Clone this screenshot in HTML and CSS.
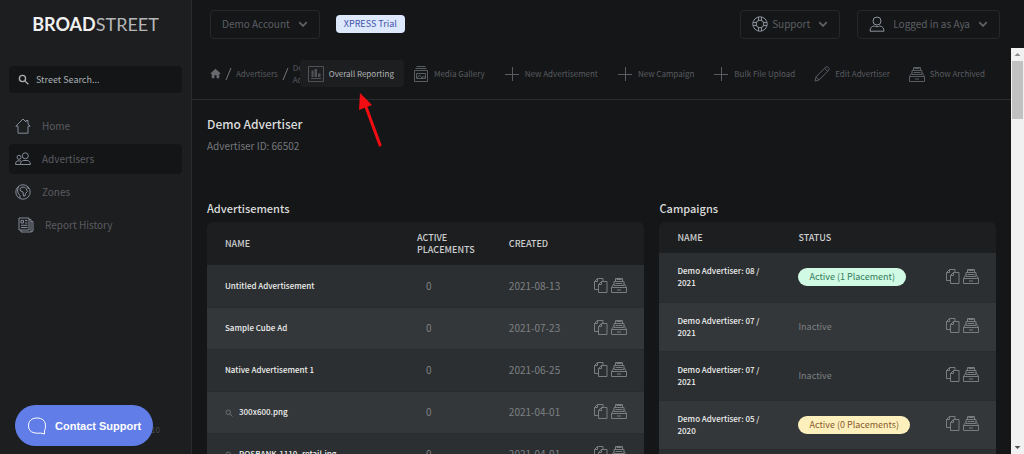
FILE: index.html
```
<!DOCTYPE html>
<html lang="en">
<head>
  <meta charset="UTF-8" />
  <meta name="viewport" content="width=device-width, initial-scale=1.0" />
  <title>Broadstreet - Demo Advertiser</title>
  <link rel="stylesheet" href="styles.css">
</head>
<body>
  <!-- icon sprite -->
  <svg class="sprite" aria-hidden="true">
    <symbol id="i-search" viewBox="0 0 16 16"><circle cx="6.500" cy="6.500" r="4.500"/><path d="M10 10l5 5"/></symbol>
    <symbol id="i-home" viewBox="0 0 16 16"><path d="M.8 8.200L8 1l3 3V2.500h2v3.500l2.200 2.200M.8 8.200h2.200V15.200h10V8.200h2.200"/></symbol>
    <symbol id="i-users" viewBox="0 0 16 16"><circle cx="10.300" cy="4.800" r="3"/><circle cx="4" cy="6.300" r="2"/><path d="M5.500 13.500h9.900c0-2.500-1.300-4-3.400-4H8.800c-2 0-3.300 1.500-3.300 4zM5.500 13.500H.6c0-2.300.8-3.600 2.400-3.600h3"/></symbol>
    <symbol id="i-globe" viewBox="0 0 16 16"><circle cx="8" cy="8" r="7.200"/><path d="M6 3.500L9.500 3l1.500 1.500 1.500 3-2 2-.5 2.500L8.500 12l-.5-4-2.500-1L5 5zM3.500 2.500L2.500 6l.5 3L5 11.500V14M12 2l1.500 3"/></symbol>
    <symbol id="i-news" viewBox="0 0 16 16"><path d="M1 1h10v12H1zM11 2.500h2V15H3v-2M13 4.500h2V14l-2 1M3 3.500h2.500V6H3zM7 3.500h2.500M7 6h2.500M3 8.300h6.500M3 10.500h6.500"/></symbol>
    <symbol id="i-house" viewBox="0 0 16 16"><path d="M8 1L0 8.500h2.500V15h4v-4.500h3V15h4V8.500H16z"/></symbol>
    <symbol id="i-report" viewBox="0 0 16 16"><path d="M.5.5h15v15H.5zM3 12.500h10"/><path d="M3.500 4.500h2v6.500h-2zM6.500 3h2.500v8H6.500zM10 7.500h2.500V11H10z" fill="currentColor" stroke="none"/></symbol>
    <symbol id="i-media" viewBox="0 0 16 16"><path d="M1.500 4.500h13v11h-13zM2.500 2.500h11M3.500.5h9M3.500 7.500h9v5h-9zM4 12l2.500-3L9 12l1.500-2 2 2"/></symbol>
    <symbol id="i-plus" viewBox="0 0 16 16"><path d="M8.500 1v14M1 8.500h14"/></symbol>
    <symbol id="i-pencil" viewBox="0 0 16 16"><path d="M1 15l1-4.200L12 .9c1.500-.8 3.800 1.300 3 3L5 14zM2 10.800L5.200 14M10.600 2.300l3.100 3.100"/></symbol>
    <symbol id="i-archive" viewBox="0 0 16 16"><path d="M.5 10.500h15v5H.5zL3 6.500M15.500 10.500l-2.500-4M3 8.500v-4h10v4M4.500 4.500v-3h7v3M5.500 2.500h5M4.500 6.500h7M3 8.500h10M6 13h4"/></symbol>
    <symbol id="i-copy" viewBox="0 0 16 16"><path d="M8.500 4.500H14v11H5.500v-8zM8.500 4.500v3h-3M5.500 12.500h-4v-8l3-3h5.500v3M4.500 1.500v3h-3"/></symbol>
    <symbol id="i-ring" viewBox="0 0 16 16"><circle cx="8" cy="8" r="7.200"/><circle cx="8" cy="8" r="3.800"/><path d="M6.500 1v3.500M9.500 1v3.500M6.500 11.500V15M9.500 11.500V15M1 6.500h3.500M1 9.500h3.500M11.500 6.500H15M11.500 9.500H15"/></symbol>
    <symbol id="i-user" viewBox="0 0 16 16"><circle cx="8" cy="5" r="4"/><path d="M1 15.200c0-3.500 2-5.200 4.500-5.200 1.500 1 3.500 1 5 0C13 10 15 11.700 15 15.200z"/></symbol>
    <symbol id="i-down" viewBox="0 0 16 16"><path d="M2 5l6 6 6-6"/></symbol>
    <symbol id="i-chat" viewBox="0 0 20 20"><path d="M17.500 14.500V18L13.500 17C11.500 17.400 9 17.300 7 16.800 3.500 16 1.500 13.500 1.500 9.800 1.500 5 4.500 2 10 2s8.500 3 8.500 7.800c0 2-.3 3.500-1 4.700z"/></symbol>
  </svg>

  <div class="app">
    <aside class="sidebar">
      <a class="logo" href="#"><b>BROAD</b>STREET</a>
      <label class="search">
        <svg class="icon"><use href="#i-search"/></svg>
        <input type="text" placeholder="Street Search..." aria-label="Street Search">
      </label>
      <nav class="nav">
        <a href="#"><svg class="icon"><use href="#i-home"/></svg>Home</a>
        <a href="#" class="active"><svg class="icon"><use href="#i-users"/></svg>Advertisers</a>
        <a href="#"><svg class="icon"><use href="#i-globe"/></svg>Zones</a>
        <a href="#" class="indent"><svg class="icon"><use href="#i-news"/></svg>Report History</a>
      </nav>
      <div class="version">10</div>
    </aside>

    <div class="main">
      <header class="topbar">
        <button class="dropdown">Demo Account <svg class="chevron"><use href="#i-down"/></svg></button>
        <span class="trial">XPRESS Trial</span>
        <button class="dropdown support"><svg class="icon"><use href="#i-ring"/></svg>Support <svg class="chevron"><use href="#i-down"/></svg></button>
        <button class="dropdown account"><svg class="icon"><use href="#i-user"/></svg>Logged in as Aya <svg class="chevron"><use href="#i-down"/></svg></button>
      </header>

      <div class="scroll-area">
        <div class="page">
          <div class="toolbar">
            <div class="breadcrumb">
              <a href="#" aria-label="Home"><svg class="house"><use href="#i-house"/></svg></a>
              <svg class="slash" viewBox="0 0 6 12"><path d="M5.500 0L.5 12"/></svg>
              <a href="#">Advertisers</a>
              <svg class="slash" viewBox="0 0 6 12"><path d="M5.500 0L.5 12"/></svg>
              <span class="current">Demo Advertiser</span>
            </div>
            <div class="actions">
              <button class="active"><svg class="icon"><use href="#i-report"/></svg>Overall Reporting</button>
              <button><svg class="icon"><use href="#i-media"/></svg>Media Gallery</button>
              <button><svg class="icon"><use href="#i-plus"/></svg>New Advertisement</button>
              <button><svg class="icon"><use href="#i-plus"/></svg>New Campaign</button>
              <button><svg class="icon"><use href="#i-plus"/></svg>Bulk File Upload</button>
              <button><svg class="icon"><use href="#i-pencil"/></svg>Edit Advertiser</button>
              <button><svg class="icon"><use href="#i-archive"/></svg>Show Archived</button>
            </div>
          </div>

          <div class="content">
            <h1>Demo Advertiser</h1>
            <p class="advertiser-id">Advertiser ID: 66502</p>

            <div class="panels">
              <section>
                <h2>Advertisements</h2>
                <table class="ads">
                  <thead>
                    <tr><th class="col-name">Name</th><th class="col-active">Active Placements</th><th>Created</th><th class="col-tools"></th></tr>
                  </thead>
                  <tbody>
                    <tr><td><a href="#">Untitled Advertisement</a></td><td class="count">0</td><td>2021-08-13</td><td class="tools"><button aria-label="Copy"><svg class="icon"><use href="#i-copy"/></svg></button><button aria-label="Archive"><svg class="icon"><use href="#i-archive"/></svg></button></td></tr>
                    <tr><td><a href="#">Sample Cube Ad</a></td><td class="count">0</td><td>2021-07-23</td><td class="tools"><button aria-label="Copy"><svg class="icon"><use href="#i-copy"/></svg></button><button aria-label="Archive"><svg class="icon"><use href="#i-archive"/></svg></button></td></tr>
                    <tr><td><a href="#">Native Advertisement 1</a></td><td class="count">0</td><td>2021-06-25</td><td class="tools"><button aria-label="Copy"><svg class="icon"><use href="#i-copy"/></svg></button><button aria-label="Archive"><svg class="icon"><use href="#i-archive"/></svg></button></td></tr>
                    <tr><td><svg class="lens"><use href="#i-search"/></svg><a href="#">300x600.png</a></td><td class="count">0</td><td>2021-04-01</td><td class="tools"><button aria-label="Copy"><svg class="icon"><use href="#i-copy"/></svg></button><button aria-label="Archive"><svg class="icon"><use href="#i-archive"/></svg></button></td></tr>
                    <tr><td><svg class="lens"><use href="#i-search"/></svg><a href="#">ROSBANK-1110_retail.jpg</a></td><td class="count">0</td><td>2021-04-01</td><td class="tools"><button aria-label="Copy"><svg class="icon"><use href="#i-copy"/></svg></button><button aria-label="Archive"><svg class="icon"><use href="#i-archive"/></svg></button></td></tr>
                  </tbody>
                </table>
              </section>

              <section>
                <h2>Campaigns</h2>
                <table class="campaigns">
                  <thead>
                    <tr><th class="col-name">Name</th><th>Status</th><th class="col-tools"></th></tr>
                  </thead>
                  <tbody>
                    <tr><td><a href="#">Demo Advertiser: 08 / 2021</a></td><td><span class="pill green">Active (1 Placement)</span></td><td class="tools"><button aria-label="Copy"><svg class="icon"><use href="#i-copy"/></svg></button><button aria-label="Archive"><svg class="icon"><use href="#i-archive"/></svg></button></td></tr>
                    <tr><td><a href="#">Demo Advertiser: 07 / 2021</a></td><td>Inactive</td><td class="tools"><button aria-label="Copy"><svg class="icon"><use href="#i-copy"/></svg></button><button aria-label="Archive"><svg class="icon"><use href="#i-archive"/></svg></button></td></tr>
                    <tr><td><a href="#">Demo Advertiser: 07 / 2021</a></td><td>Inactive</td><td class="tools"><button aria-label="Copy"><svg class="icon"><use href="#i-copy"/></svg></button><button aria-label="Archive"><svg class="icon"><use href="#i-archive"/></svg></button></td></tr>
                    <tr><td><a href="#">Demo Advertiser: 05 / 2020</a></td><td><span class="pill yellow">Active (0 Placements)</span></td><td class="tools"><button aria-label="Copy"><svg class="icon"><use href="#i-copy"/></svg></button><button aria-label="Archive"><svg class="icon"><use href="#i-archive"/></svg></button></td></tr>
                    <tr><td></td><td></td><td class="tools"></td></tr>
                  </tbody>
                </table>
              </section>
            </div>
          </div>
        </div>

        <div class="scrollbar" aria-hidden="true">
          <svg viewBox="0 0 13 13"><path d="M3.500 8l3-3 3 3z" fill="#8b8b8b"/></svg>
          <div class="thumb"></div>
          <svg viewBox="0 0 13 13"><path d="M3.500 5l3 3 3-3z" fill="#505050"/></svg>
        </div>
      </div>
    </div>
  </div>

  <svg class="pointer" viewBox="0 0 28 58" aria-hidden="true"><path d="M23 54L9 16" stroke="#f10d12" stroke-width="3" stroke-linecap="round"/><path d="M3 2L2 19l13-5z" fill="#f10d12"/></svg>

  <button class="contact"><svg><use href="#i-chat"/></svg>Contact Support</button>
</body>
</html>
```
FILE: styles.css
```
* {
  box-sizing: border-box;
}
body {
  margin: 0;
  background-color: #151618;
  color: #66696d;
  font-family: "Noto Sans CJK SC", "Noto Sans", sans-serif;
  font-size: 10px;
  line-height: 16px;
}
a {
  color: inherit;
  text-decoration: none;
}
button {
  font: inherit;
  color: inherit;
  background: none;
  border: none;
  padding: 0;
  cursor: pointer;
}
svg {
  flex: none;
  fill: none;
  stroke: currentColor;
}
.sprite {
  display: none;
}
.icon {
  width: 16px;
  height: 16px;
}
.chevron {
  width: 10px;
  height: 10px;
  stroke-width: 3;
}
.app {
  display: flex;
  height: 100vh;
  overflow: hidden;
}

/* sidebar */
.sidebar {
  display: flex;
  flex-direction: column;
  width: 192px;
  flex: none;
  padding: 12px 9px 16px;
  background-color: #1d1e20;
  border-right: 1px solid #292b2e;
}
.logo {
  font-family: Lato, sans-serif;
  font-size: 18px;
  line-height: 24px;
  color: #b4b6b8;
  text-align: center;
}
.logo b {
  color: #f0f0f0;
}
.search {
  display: flex;
  align-items: center;
  gap: 7px;
  margin-top: 30px;
  padding: 0 9px;
  height: 27px;
  border-radius: 4px;
  background-color: #141517;
  color: #a9adb0;
}
.search .icon {
  width: 11px;
  height: 11px;
  stroke-width: 2;
}
.search input {
  flex: 1;
  min-width: 0;
  padding: 0;
  border: none;
  background: none;
  font: inherit;
  font-size: 9px;
  color: inherit;
}
.search input::placeholder {
  color: #a9b0b3;
}
.nav {
  display: flex;
  flex-direction: column;
  gap: 3px;
  margin-top: 18px;
  color: #5a5c61;
}
.nav a {
  display: flex;
  align-items: center;
  gap: 11px;
  height: 30px;
  padding-left: 6px;
  border-radius: 4px;
}
.nav .icon {
  color: #858a98;
}
.nav a.active {
  background-color: #141517;
}
.nav a.indent {
  padding-left: 9px;
}
.version {
  margin-top: auto;
  padding-right: 22px;
  text-align: right;
  font-size: 8px;
  color: #4a4c50;
}

/* top bar */
.main {
  display: flex;
  flex-direction: column;
  flex: 1;
  min-width: 0;
}
.topbar {
  display: flex;
  align-items: center;
  height: 48px;
  padding: 0 24px 0 18px;
}
.dropdown {
  display: flex;
  align-items: center;
  gap: 8px;
  height: 29px;
  padding: 0 11px;
  border: 1px solid #26282a;
  border-radius: 4px;
  color: #5c5f64;
}
.dropdown .icon {
  color: #8c939b;
}
.trial {
  margin-left: 16px;
  padding: 1px 8px;
  border-radius: 4px;
  background-color: #dde8fd;
  color: #4353ab;
  font-size: 9px;
}
.support {
  gap: 4px;
  margin-left: auto;
}
.support .chevron {
  margin-left: 4px;
}
.account {
  margin-left: 17px;
}

/* page */
.scroll-area {
  display: flex;
  flex: 1;
  min-height: 0;
}
.page {
  flex: 1;
  min-width: 0;
  overflow: hidden;
}
.scrollbar {
  display: flex;
  flex-direction: column;
  width: 13px;
  background-color: #f1f1f1;
}
.scrollbar svg {
  height: 13px;
  stroke: none;
}
.scrollbar svg:last-child {
  margin-top: auto;
}
.thumb {
  height: 58px;
  margin: 0 1px;
  background-color: #c1c1c1;
}
.toolbar {
  display: flex;
  align-items: center;
  height: 52px;
  padding: 0 16px 0 18px;
  border-bottom: 1px solid #292b2d;
  font-size: 8px;
  line-height: 12px;
  color: #595c60;
}
.breadcrumb {
  display: flex;
  align-items: center;
  gap: 4px;
  flex: 1;
  min-width: 0;
  overflow: hidden;
}
.breadcrumb .house {
  display: block;
  width: 11px;
  height: 11px;
  fill: #66696e;
  stroke: none;
}
.slash {
  width: 7px;
  height: 12px;
  stroke: #74777b;
}
.current {
  width: min-content;
}
.actions {
  display: flex;
  flex: none;
  gap: 1px;
}
.actions button {
  display: flex;
  align-items: center;
  gap: 5px;
  height: 27px;
  padding: 0 10px 0 8px;
  border-radius: 4px;
}
.actions button.active {
  background-color: #1d1e20;
  color: #b4b6b8;
}
.actions .active .icon {
  color: #505257;
}
.content {
  padding: 16px 15px 0;
}
h1,
h2 {
  margin: 0;
  font-weight: 500;
  color: #dcdddd;
}
h1 {
  font-size: 12px;
  line-height: 16px;
}
h2 {
  font-size: 11px;
  line-height: 16px;
  margin-bottom: 6px;
}
.advertiser-id {
  margin: 6px 0 0;
  color: #76787c;
}
.panels {
  display: grid;
  grid-template-columns: 13fr 10fr;
  align-items: start;
  gap: 15px;
  margin-top: 46px;
}

/* tables */
table {
  width: 100%;
  table-layout: fixed;
  border-collapse: collapse;
  border-radius: 6px 6px 0 0;
  overflow: hidden;
}
th {
  padding: 0;
  background-color: #1d1e20;
  font-size: 9px;
  line-height: 12px;
  font-weight: 500;
  text-align: left;
  text-transform: uppercase;
  color: #cdcecf;
}
td {
  padding: 0;
  color: #7d8083;
}
th:first-child,
td:first-child {
  padding-left: 18px;
}
td:first-child {
  font-size: 8px;
  line-height: 12px;
  font-weight: 500;
  color: #eeefef;
}
tbody tr {
  background-color: #2c2f31;
  border-bottom: 1px solid #292c2e;
}
tbody tr:nth-child(even) {
  background-color: #343739;
}
.ads th {
  height: 43px;
}
.ads td {
  height: 42px;
}
.ads .col-name {
  width: 48%;
}
.ads .col-active {
  width: 21%;
  padding-right: 24px;
}
.ads .count {
  padding-left: 9px;
}
.campaigns th {
  height: 31px;
}
.campaigns td {
  height: 49px;
  font-size: 9px;
}
.campaigns td:first-child {
  padding-right: 32px;
  font-size: 8px;
}
.campaigns .col-name {
  width: 139px;
}
.col-tools {
  width: 51px;
}
.tools {
  padding-bottom: 3px;
  white-space: nowrap;
}
.tools button {
  vertical-align: middle;
}
.tools button + button {
  margin-left: 2px;
}
.tools .icon {
  display: block;
  color: #7a7d80;
}
.lens {
  width: 8px;
  height: 8px;
  margin-right: 6px;
  color: #6d7073;
  stroke-width: 2;
  vertical-align: middle;
}
.pill {
  display: inline-block;
  padding: 1px 11px;
  border-radius: 9px;
}
.pill.green {
  background-color: #d0fae3;
  color: #347a5b;
}
.pill.yellow {
  background-color: #fdf0bd;
  color: #895a2d;
}

/* overlays */
.pointer {
  position: absolute;
  left: 357px;
  top: 91px;
  width: 28px;
  height: 58px;
}
.pointer path:last-child {
  stroke: none;
}
.contact {
  position: fixed;
  left: 15px;
  bottom: 8px;
  display: flex;
  align-items: center;
  gap: 8px;
  height: 41px;
  padding: 0 12px;
  border-radius: 21px;
  background-color: #617de8;
  color: #fff;
  font-family: "Liberation Sans", Arial, sans-serif;
  font-size: 11px;
  font-weight: bold;
}
.contact svg {
  width: 20px;
  height: 20px;
}
```
